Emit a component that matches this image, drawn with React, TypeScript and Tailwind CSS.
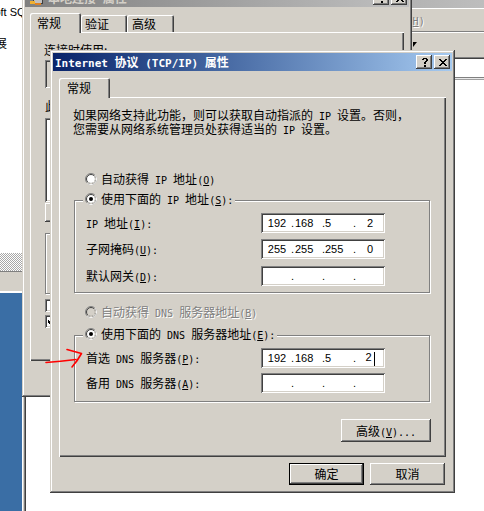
import { Fragment } from "react";

const CJK = "[font-family:'Noto_Sans_CJK_SC',sans-serif] text-[12px] leading-[14px] text-black";
const LAT = "[font-family:'DejaVu_Sans_Mono',monospace] text-[10px] leading-[0px] whitespace-pre";
const TLAT = "[font-family:'DejaVu_Sans_Mono',monospace] text-[11px] leading-[0px] whitespace-pre";
const IPF = "[font-family:'Liberation_Sans',sans-serif] text-[11px]";
const RAISED =
  "bg-[#d4d0c8] shadow-[inset_-1px_-1px_#404040,inset_1px_1px_#ffffff,inset_-2px_-2px_#808080,inset_2px_2px_#d4d0c8]";
const WIN =
  "bg-[#d4d0c8] shadow-[inset_-1px_-1px_#404040,inset_1px_1px_#d4d0c8,inset_-2px_-2px_#808080,inset_2px_2px_#ffffff]";
const SUNKEN =
  "shadow-[inset_1px_1px_#808080,inset_-1px_-1px_#ffffff,inset_2px_2px_#404040,inset_-2px_-2px_#d4d0c8]";
const PANEL = "bg-[#d4d0c8] shadow-[inset_1px_1px_#ffffff,inset_-1px_-1px_#404040,inset_-2px_-2px_#808080]";
const TAB = "bg-[#d4d0c8] rounded-t-[2px] shadow-[inset_1px_1px_#ffffff,inset_-1px_0_#404040,inset_-2px_0_#808080]";
const GROUP =
  "ml-px w-[356px] min-w-0 border border-[#808080] shadow-[inset_1px_1px_#ffffff,1px_1px_#ffffff] px-[11px]";
const GRAYTXT = "text-[#808080] [text-shadow:1px_1px_#ffffff]";

// latin runs get a monospace face so they sit at half the width of a hanzi
function Tx({ s, lat = LAT }: { s: string; lat?: string }) {
  return (
    <>
      {s.split(/([ -~]+)/).map((p, i) =>
        /^[ -~]+$/.test(p) ? (
          <span key={i} className={lat}>
            {p}
          </span>
        ) : (
          <Fragment key={i}>{p}</Fragment>
        )
      )}
    </>
  );
}

function Lbl({ s, k, colon, dots }: { s: string; k: string; colon?: boolean; dots?: boolean }) {
  return (
    <span className="whitespace-nowrap">
      <Tx s={s} />
      <span className={LAT}>
        (<u>{k}</u>){colon ? ":" : ""}
        {dots ? "..." : ""}
      </span>
    </span>
  );
}

function CapBtn({ kind, className = "" }: { kind: "help" | "close"; className?: string }) {
  return (
    <div className={`w-[16px] h-[14px] shrink-0 ${RAISED} flex items-center justify-center ${className}`}>
      {kind === "close" ? (
        <svg width="8" height="7" viewBox="0 0 8 7" shapeRendering="crispEdges" className="ml-px">
          <rect x="0" y="0" width="2" height="1" fill="#000" />
          <rect x="6" y="0" width="2" height="1" fill="#000" />
          <rect x="1" y="1" width="2" height="1" fill="#000" />
          <rect x="5" y="1" width="2" height="1" fill="#000" />
          <rect x="2" y="2" width="4" height="1" fill="#000" />
          <rect x="3" y="3" width="2" height="1" fill="#000" />
          <rect x="2" y="4" width="4" height="1" fill="#000" />
          <rect x="1" y="5" width="2" height="1" fill="#000" />
          <rect x="5" y="5" width="2" height="1" fill="#000" />
          <rect x="0" y="6" width="2" height="1" fill="#000" />
          <rect x="6" y="6" width="2" height="1" fill="#000" />
        </svg>
      ) : (
        <svg width="6" height="9" viewBox="0 0 6 9" shapeRendering="crispEdges" className="ml-px">
          <rect x="1" y="0" width="4" height="1" fill="#000" />
          <rect x="0" y="1" width="2" height="1" fill="#000" />
          <rect x="4" y="1" width="2" height="1" fill="#000" />
          <rect x="4" y="2" width="2" height="1" fill="#000" />
          <rect x="3" y="3" width="2" height="1" fill="#000" />
          <rect x="2" y="4" width="2" height="2" fill="#000" />
          <rect x="2" y="7" width="2" height="2" fill="#000" />
        </svg>
      )}
    </div>
  );
}

function NetIcon() {
  return (
    <svg width="16" height="16" viewBox="0 0 16 16" shapeRendering="crispEdges" className="shrink-0">
      <rect x="1" y="2" width="9" height="7" fill="#c0c0c0" stroke="#404040" />
      <rect x="6" y="6" width="9" height="7" fill="#c0c0c0" stroke="#404040" />
      <rect x="3" y="11" width="5" height="3" fill="#f0b030" />
      <rect x="8" y="13" width="6" height="2" fill="#e08020" />
    </svg>
  );
}

function TitleBar({
  title,
  active,
  icon,
  buttons = true,
}: {
  title: string;
  active?: boolean;
  icon?: boolean;
  buttons?: boolean;
}) {
  return (
    <div
      className={`h-[18px] shrink-0 flex items-center px-[2px] bg-linear-to-r ${
        active ? "from-[#0a246a] to-[#a6caf0] text-white" : "from-[#808080] to-[#c0c0c0] text-[#d4d0c8]"
      }`}
    >
      {icon && <NetIcon />}
      <div className={`flex-1 font-bold whitespace-nowrap overflow-hidden ${icon ? "ml-[5px]" : ""}`}>
        <Tx s={title} lat={TLAT} />
      </div>
      {buttons && (
        <>
          <CapBtn kind="help" />
          <CapBtn kind="close" className="ml-[2px]" />
        </>
      )}
    </div>
  );
}

function Tab({ label, active, className }: { label: string; active?: boolean; className: string }) {
  return (
    <div
      className={`${TAB} ${active ? "h-[20px] relative z-10 -mb-px" : "h-[17px]"} flex items-center ${className}`}
    >
      {label}
    </div>
  );
}

function Radio({ on, disabled }: { on?: boolean; disabled?: boolean }) {
  return (
    <svg width="12" height="12" viewBox="0 0 12 12" className="shrink-0">
      <circle cx="6" cy="6" r="5.5" fill="none" stroke="#808080" />
      <path d="M9.89 2.11A5.5 5.5 0 0 1 2.11 9.89" fill="none" stroke="#ffffff" />
      <circle cx="6" cy="6" r="4.5" fill={disabled ? "#d4d0c8" : "#ffffff"} stroke="#404040" />
      <path d="M9.18 2.82A4.5 4.5 0 0 1 2.82 9.18" fill="none" stroke="#d4d0c8" />
      {on && <circle cx="6" cy="6" r="2" fill="#000" />}
    </svg>
  );
}

function RadioRow({
  label,
  k,
  on,
  disabled,
  colon,
}: {
  label: string;
  k: string;
  on?: boolean;
  disabled?: boolean;
  colon?: boolean;
}) {
  return (
    <div className="flex items-center h-[14px] gap-[4px] whitespace-nowrap">
      <Radio on={on} disabled={disabled} />
      <span className={disabled ? GRAYTXT : ""}>
        <Lbl s={label} k={k} colon={colon} />
      </span>
    </div>
  );
}

function IpBox({ v, caret }: { v?: string[]; caret?: boolean }) {
  const align = ["text-center", "text-left pl-px", "text-left", "text-center"];
  return (
    <div className={`w-[124px] h-[20px] shrink-0 bg-white ${SUNKEN} flex items-center pl-[2px] ${IPF}`}>
      {[0, 1, 2, 3].map((i) => (
        <Fragment key={i}>
          <span className={`w-[28px] ${align[i]}`}>
            {v ? v[i] : ""}
            {caret && i === 3 && <span className="inline-block w-px h-[14px] bg-black align-middle ml-[2px]" />}
          </span>
          {i < 3 && <span className="w-[3px] text-center">.</span>}
        </Fragment>
      ))}
    </div>
  );
}

function IpRow({
  label,
  k,
  v,
  caret,
  className,
}: {
  label: string;
  k: string;
  v?: string[];
  caret?: boolean;
  className: string;
}) {
  return (
    <div className={`flex items-center h-[20px] ${className}`}>
      <span className="w-[175px] shrink-0">
        <Lbl s={label} k={k} colon />
      </span>
      <IpBox v={v} caret={caret} />
    </div>
  );
}

function Check({ on }: { on?: boolean }) {
  return (
    <div className={`w-[13px] h-[13px] shrink-0 bg-white ${SUNKEN} flex items-center justify-center`}>
      {on && (
        <svg width="7" height="7" viewBox="0 0 7 7" shapeRendering="crispEdges">
          <path d="M6 0h1v3h-1zM5 1h1v3h-1zM4 2h1v3h-1zM0 2h1v3h-1zM1 3h1v3h-1zM2 4h1v3h-1zM3 3h1v3h-1z" fill="#000" />
        </svg>
      )}
    </div>
  );
}

function LeftStrip() {
  return (
    <div className="absolute left-0 top-0 w-[22px] h-full flex flex-col overflow-hidden">
      <div className="h-[253px] bg-white pt-[6px]">
        <div className="whitespace-nowrap -ml-[38px] [font-family:'Liberation_Sans',sans-serif] text-[11px] leading-[12px]">
          Microsoft SQL Server
        </div>
        <div className="whitespace-nowrap -ml-[17px] mt-[18px]">扩展</div>
      </div>
      <div className="h-[18px] bg-[repeating-conic-gradient(#a8a8a8_0%_25%,#ffffff_0%_50%)] bg-[length:2px_2px]" />
      <div className="h-[20px] bg-[#d4d0c8] border-t border-[#808080]" />
      <div className="h-[2px] bg-white" />
      <div className="flex-1 bg-[#3a6ea5]" />
    </div>
  );
}

function MainWindow() {
  const menus: [string, string][] = [
    ["文件", "F"],
    ["操作", "A"],
    ["查看", "V"],
    ["收藏夹", "O"],
    ["窗口", "W"],
    ["帮助", "H"],
  ];
  return (
    <div className="absolute left-[22px] top-[-12px] w-[480px] h-[540px] bg-[#d4d0c8] pl-[2px] pt-[2px] flex flex-col shadow-[inset_1px_1px_#ffffff]">
      <TitleBar title="计算机管理" buttons={false} />
      <div className="h-px bg-white" />
      <div className={`h-[22px] flex items-center gap-[26px] pl-[6px] ${GRAYTXT}`}>
        {menus.map(([m, k]) => (
          <Lbl key={k} s={m} k={k} />
        ))}
      </div>
      <div className="h-px bg-[#808080]" />
      <div className="h-px bg-white" />
      <div className="h-[24px] flex items-start pt-[9px] pl-[389px]">
        <svg width="4" height="5" viewBox="0 0 4 5">
          <path d="M0 0H4L0 5Z" fill="#000" />
        </svg>
      </div>
      <div className="flex-1 bg-white shadow-[inset_1px_1px_#808080,inset_2px_2px_#404040] pl-[2px] pt-[2px]">
        <div className="h-[18px]" />
        <div className="h-px bg-[#808080]" />
        <div className="h-px bg-[#e8e8e8]" />
        <div className="h-px bg-[#a0a0a0]" />
      </div>
    </div>
  );
}

function BackDialog() {
  return (
    <div className={`absolute left-[22px] top-[-14px] w-[390px] h-[411px] ${WIN} p-[3px] flex flex-col`}>
      <TitleBar title="本地连接 属性" icon />
      <div className="mx-[5px] mt-[6px] flex items-end">
        <Tab active label="常规" className="w-[51px] pl-[7px]" />
        <Tab label="验证" className="w-[46px] pl-[4px]" />
        <Tab label="高级" className="w-[47px] pl-[5px]" />
      </div>
      <div className={`mx-[5px] h-[329px] ${PANEL} pl-[14px] pt-[11px] flex flex-col`}>
        <div>连接时使用:</div>
        <div className={`mt-[3px] ml-px w-[345px] h-[28px] bg-[#d4d0c8] ${SUNKEN}`} />
        <div className="mt-[11px] ml-px">
          <Lbl s="此连接使用下列项目" k="O" colon />
        </div>
        <div className={`mt-[5px] ml-px w-[345px] h-[84px] bg-white ${SUNKEN}`} />
        <div className="mt-[1px] ml-px flex gap-[6px]">
          <div className={`${RAISED} w-[75px] h-[19px]`} />
          <div className={`${RAISED} w-[75px] h-[19px]`} />
        </div>
        <div className="mt-[11px] ml-px w-[345px] h-[61px] border border-[#808080] shadow-[inset_1px_1px_#ffffff,1px_1px_#ffffff]" />
        <div className="mt-[4px] ml-px flex items-center gap-[4px]">
          <Check />
          <span>连接后在通知区域显示图标</span>
        </div>
        <div className="mt-[2px] ml-px flex items-center gap-[4px]">
          <Check on />
          <span>此连接被限制或无连接时通知我</span>
        </div>
      </div>
      <div className="mx-[5px] mt-[6px] flex justify-end gap-[6px]">
        <div className={`${RAISED} w-[75px] h-[22px] flex items-center justify-center`}>确定</div>
        <div className={`${RAISED} w-[75px] h-[22px] flex items-center justify-center`}>取消</div>
      </div>
    </div>
  );
}

function FrontDialog() {
  return (
    <div className={`absolute left-[50px] top-[50px] w-[405px] h-[443px] ${WIN} p-[3px] flex flex-col`}>
      <TitleBar active title="Internet 协议 (TCP/IP) 属性" />
      <div className="mx-[6px] mt-[7px] flex items-end">
        <Tab active label="常规" className="w-[51px] pl-[8px]" />
      </div>
      <div className={`mx-[6px] h-[360px] ${PANEL} pl-[14px] pt-[11px]`}>
        <p className="whitespace-nowrap">
          <Tx s="如果网络支持此功能，则可以获取自动指派的 IP 设置。否则，" />
          <br />
          <Tx s="您需要从网络系统管理员处获得适当的 IP 设置。" />
        </p>

        <div className="mt-[36px] pl-[12px]">
          <RadioRow label="自动获得 IP 地址" k="O" />
        </div>

        <fieldset className={`${GROUP} mt-[6px] pb-[6px]`}>
          <legend className="ml-[-3px] px-[2px] pb-[2px] bg-[#d4d0c8]">
            <RadioRow on label="使用下面的 IP 地址" k="S" colon />
          </legend>
          <IpRow className="mt-[5px]" label="IP 地址" k="I" v={["192", "168", "5", "2"]} />
          <IpRow className="mt-[6px]" label="子网掩码" k="U" v={["255", "255", "255", "0"]} />
          <IpRow className="mt-[7px]" label="默认网关" k="D" />
        </fieldset>

        <div className="mt-[12px] pl-[12px]">
          <RadioRow disabled label="自动获得 DNS 服务器地址" k="B" />
        </div>

        <fieldset className={`${GROUP} mt-[8px] pb-[8px]`}>
          <legend className="ml-[-3px] px-[2px] pb-[2px] bg-[#d4d0c8]">
            <RadioRow on label="使用下面的 DNS 服务器地址" k="E" colon />
          </legend>
          <IpRow className="mt-[5px]" label="首选 DNS 服务器" k="P" v={["192", "168", "5", "2"]} caret />
          <IpRow className="mt-[5px]" label="备用 DNS 服务器" k="A" />
        </fieldset>

        <div className="mt-[17px] ml-px w-[357px] flex justify-end">
          <div className={`${RAISED} w-[90px] h-[23px] flex items-center justify-center`}>
            <Lbl s="高级" k="V" dots />
          </div>
        </div>
      </div>

      <div className="mx-[6px] mt-[6px] pr-px flex justify-end gap-[6px]">
        <div className="w-[75px] h-[22px] border border-black bg-[#d4d0c8] shadow-[inset_-1px_-1px_#404040,inset_1px_1px_#ffffff,inset_-2px_-2px_#808080] flex items-center justify-center">
          确定
        </div>
        <div className={`${RAISED} w-[75px] h-[22px] flex items-center justify-center`}>取消</div>
      </div>
    </div>
  );
}

function RedArrow() {
  return (
    <svg
      className="absolute left-[40px] top-[344px]"
      width="50"
      height="30"
      viewBox="40 344 50 30"
      fill="none"
      stroke="#ff0000"
      strokeWidth="1.6"
      strokeLinecap="round"
      strokeLinejoin="round"
    >
      <path d="M46 362.5Q60 361.5 76 359.5" />
      <path d="M67 349.5L81.5 353.5Q78 360 72 367" />
    </svg>
  );
}

export default function App() {
  return (
    <div className={`relative w-[484px] h-[511px] overflow-hidden bg-white ${CJK}`}>
      <LeftStrip />
      <MainWindow />
      <BackDialog />
      <FrontDialog />
      <RedArrow />
    </div>
  );
}
